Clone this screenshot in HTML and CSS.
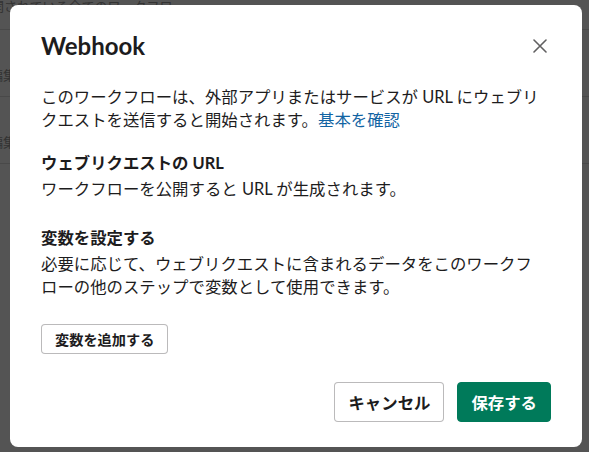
FILE: index.html
```html
<!DOCTYPE html>
<html lang="ja">
  <head>
    <meta charset="UTF-8" />
    <title>Webhook</title>
    <link rel="stylesheet" href="styles.css">
  </head>
  <body>
    <!-- page behind the dialog -->
    <div class="page">
      <div class="page-head">公開されている全てのワークフロー</div>
      <div class="page-row">編集</div>
      <div class="page-row">編集</div>
    </div>

    <div class="overlay">
      <div class="modal" role="dialog">
        <div class="modal-header">
          <h1>Webhook</h1>
          <button class="close-btn" aria-label="閉じる">
            <svg width="14" height="14" viewBox="0 0 14 14">
              <path d="M1 1 L13 13 M13 1 L1 13" stroke="currentColor" stroke-width="1.6" stroke-linecap="round" fill="none" />
            </svg>
          </button>
        </div>

        <div class="modal-body">
          <p>このワークフローは、外部アプリまたはサービスが URL にウェブリクエストを送信すると開始されます。<a href="#">基本を確認</a></p>

          <div class="section section-url">
            <h2>ウェブリクエストの URL</h2>
            <p>ワークフローを公開すると URL が生成されます。</p>
          </div>

          <div class="section section-vars">
            <h2>変数を設定する</h2>
            <p>必要に応じて、ウェブリクエストに含まれるデータをこのワークフローの他のステップで変数として使用できます。</p>
          </div>

          <button class="btn btn-small">変数を追加する</button>
        </div>

        <div class="modal-footer">
          <button class="btn">キャンセル</button>
          <button class="btn btn-primary">保存する</button>
        </div>
      </div>
    </div>
  </body>
</html>
```

FILE: styles.css
```css
* {
  box-sizing: border-box;
}

body {
  margin: 0;
  font-family: Lato, "Noto Sans CJK JP", sans-serif;
  color: #1d1c1d;
  background: #fff;
  overflow: hidden;
}

/* background page */
.page {
  margin-left: -22px;
  font-size: 13px;
  color: #9a9a9a;
}

.page-head {
  margin-top: -2px;
  line-height: 16px;
  padding-bottom: 15px;
  border-bottom: 1px solid #ddd;
}

.page-row {
  line-height: 16px;
  padding: 37px 0 13px 12px;
  border-bottom: 1px solid #ddd;
}

/* dialog */
.overlay {
  position: fixed;
  top: 0;
  left: 0;
  width: 100vw;
  height: 100vh;
  background: rgba(0, 0, 0, 0.67);
  display: flex;
  padding: 5px 7px 5px 10px;
}

.modal {
  width: 572px;
  height: 442px;
  background: #fff;
  border-radius: 8px;
  padding: 26px 31px 25px;
  display: flex;
  flex-direction: column;
}

.modal-header {
  display: flex;
  justify-content: space-between;
  align-items: center;
  height: 30px;
}

.modal-header h1 {
  margin: 0;
  font-size: 24px;
  line-height: 30px;
  font-weight: 700;
}

.close-btn {
  width: 28px;
  height: 28px;
  margin-right: -3px;
  padding: 0;
  border: none;
  background: none;
  color: #616061;
  display: flex;
  align-items: center;
  justify-content: center;
  cursor: pointer;
}

.modal-body {
  margin-top: 24px;
  max-width: 502px;
  font-size: 16.4px;
  line-height: 23px;
  display: flex;
  flex-direction: column;
}

.modal-body p {
  margin: 0;
}

.modal-body a {
  color: #1264a3;
  text-decoration: none;
}

.section h2 {
  margin: 0 0 3px;
  font-size: 16.4px;
  line-height: 23px;
  font-weight: 700;
}

.section-url {
  margin-top: 20px;
}

.section-vars {
  margin-top: 26px;
}

.modal-footer {
  margin-top: auto;
  display: flex;
  justify-content: flex-end;
  gap: 13px;
}

.btn {
  height: 40px;
  padding: 0 13px;
  border: 1px solid rgba(29, 28, 29, 0.3);
  border-radius: 4px;
  background: #fff;
  color: #1d1c1d;
  font-family: Lato, "Noto Sans CJK JP", sans-serif;
  font-size: 16.4px;
  font-weight: 700;
  cursor: pointer;
}

.btn-primary {
  background: #007a5a;
  border-color: #007a5a;
  color: #fff;
}

.btn-small {
  align-self: flex-start;
  height: 30px;
  margin-top: 26px;
  font-size: 14.2px;
}
```
